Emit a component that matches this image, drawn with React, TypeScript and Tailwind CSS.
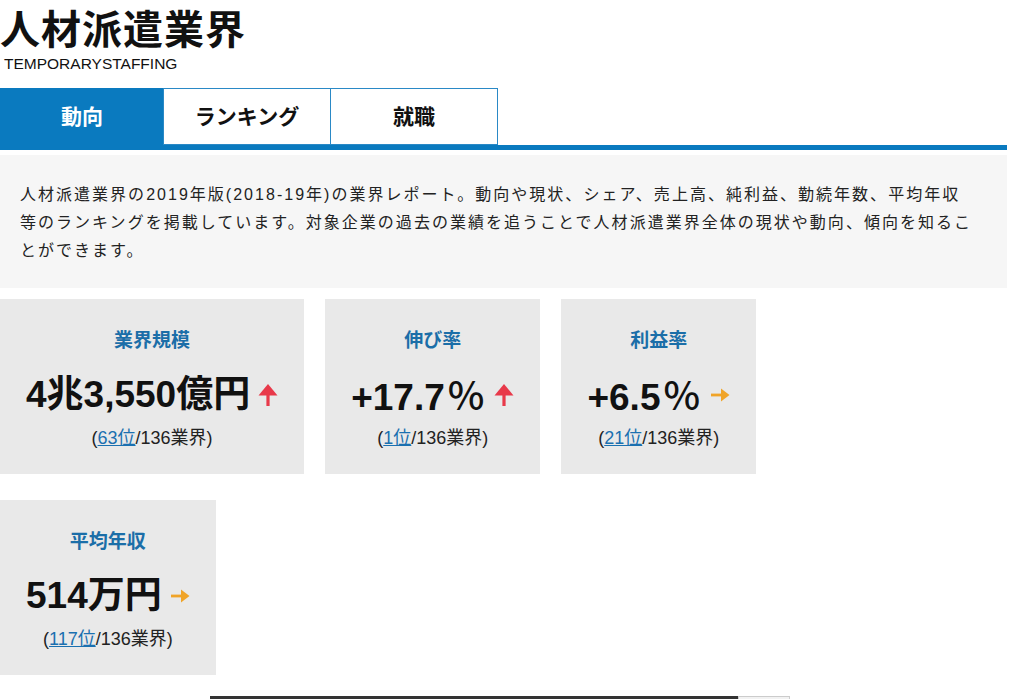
import React from 'react';

const font = "font-['Liberation_Sans','Noto_Sans_CJK_JP',sans-serif]";

const tabs = [
    { label: '動向', active: true },
    { label: 'ランキング', active: false },
    { label: '就職', active: false },
];

type Trend = 'up' | 'flat';

const stats: { label: string; value: string; trend: Trend; rank: string }[][] = [
    [
        { label: '業界規模', value: '4兆3,550億円', trend: 'up', rank: '63位' },
        { label: '伸び率', value: '+17.7%', trend: 'up', rank: '1位' },
        { label: '利益率', value: '+6.5%', trend: 'flat', rank: '21位' },
    ],
    [{ label: '平均年収', value: '514万円', trend: 'flat', rank: '117位' }],
];

function TrendIcon({ trend }: { trend: Trend }) {
    if (trend === 'up') {
        return (
            <svg width="20" height="24" viewBox="0 0 20 24" className="shrink-0">
                <polygon points="10,1 19.5,12.5 0.5,12.5" fill="#e8394a" />
                <rect x="8.4" y="11" width="3.2" height="12" fill="#e8394a" />
            </svg>
        );
    }
    return (
        <svg width="20" height="14" viewBox="0 0 20 14" className="shrink-0">
            <rect x="1" y="5.6" width="12" height="2.8" fill="#f0a428" />
            <polygon points="19.5,7 11,0.5 11,13.5" fill="#f0a428" />
        </svg>
    );
}

// the percent sign in the reference comes from the Japanese font: wider and lighter
function Value({ value }: { value: string }) {
    if (!value.endsWith('%')) return <>{value}</>;
    return (
        <>
            {value.slice(0, -1)}
            <span className="pl-[3px] pr-[2px] text-[39px] font-['Noto_Sans_CJK_JP',sans-serif] font-medium">%</span>
        </>
    );
}

function StatCard({ label, value, trend, rank }: { label: string; value: string; trend: Trend; rank: string }) {
    return (
        <div className="bg-[#e9e9e9] h-[175px] px-[26px] pt-[29px] flex flex-col items-center">
            <div className="text-[19px] leading-[26px] font-bold text-[#1b6ea8]">{label}</div>
            <div className="mt-[19px] h-[44px] flex items-center gap-[8px]">
                <span className="text-[37px] leading-[44px] font-bold text-[#111] whitespace-nowrap">
                    <Value value={value} />
                </span>
                <TrendIcon trend={trend} />
            </div>
            <div className="mt-[9px] text-[18px] leading-[24px] text-[#222] whitespace-nowrap">
                (<a href="#" className="text-[#1a70b0] underline">{rank}</a>/136業界)
            </div>
        </div>
    );
}

export default function App() {
    return (
        <div className={`${font} w-[1007px] bg-white text-[#111]`}>
            <h1 className="pt-[6px] text-[40px] leading-[48px] font-bold tracking-[1px]">人材派遣業界</h1>
            <p className="pl-[4px] text-[15.5px] leading-[18px] mt-[1px]">TEMPORARYSTAFFING</p>

            <nav className="mt-[15px] flex">
                {tabs.map((t) => (
                    <div
                        key={t.label}
                        className={
                            t.active
                                ? 'w-[164px] h-[57px] flex items-center justify-center bg-[#0a7abf] text-white text-[21px] font-bold border border-[#0a7abf]'
                                : 'w-[168px] h-[57px] flex items-center justify-center bg-white text-[#111] text-[21px] font-bold border border-[#2a89c6] -ml-px'
                        }
                    >
                        {t.label}
                    </div>
                ))}
            </nav>
            <div className="h-[5px] bg-[#0a7abf]" />

            <div className="mt-[5px] bg-[#f6f6f6] px-[20px] pt-[26px] pb-[23px] text-[16px] leading-[28px] tracking-[2.02px] text-[#222] whitespace-nowrap">
                人材派遣業界の2019年版(2018-19年)の業界レポート。動向や現状、シェア、売上高、純利益、勤続年数、平均年収
                <br />
                等のランキングを掲載しています。対象企業の過去の業績を追うことで人材派遣業界全体の現状や動向、傾向を知るこ
                <br />
                とができます。
            </div>

            <div className="mt-[11px] flex flex-col gap-[26px]">
                {stats.map((row, i) => (
                    <div key={i} className="flex gap-[21px]">
                        {row.map((s) => (
                            <StatCard key={s.label} {...s} />
                        ))}
                    </div>
                ))}
            </div>

            <div className="mt-[21px] ml-[210px] flex h-[20px]">
                <div className="w-[528px] bg-[#333]" />
                <div className="w-[52px] bg-[#f2f2f2] border border-[#ccc]" />
            </div>
        </div>
    );
}
